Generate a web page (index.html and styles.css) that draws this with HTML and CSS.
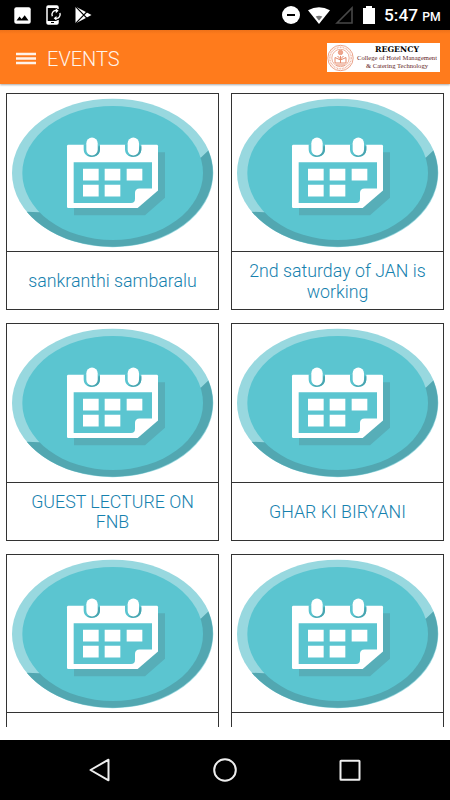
FILE: index.html
```
<!DOCTYPE html>
<html lang="en">

<head>
    <meta charset="UTF-8">
    <meta name="viewport" content="width=device-width, initial-scale=1.0">
    <title>Events</title>
    <link rel="stylesheet" href="styles.css">
</head>

<body>
    <!-- shared calendar picture -->
    <svg class="sprite" aria-hidden="true">
        <symbol id="calendar" viewBox="21 21 633 474" preserveAspectRatio="none">
            <ellipse cx="338" cy="258.5" rx="302" ry="223.5" fill="#98d8df" />
            <path d="M625 191 A302 223.5 0 0 1 80 375 L118 377 L338 258 L603 212Z" fill="#52a7b1" />
            <ellipse cx="338" cy="258.5" rx="271" ry="201.5" fill="#5bc5d0" />
            <path d="M222 360 H412 L470 196 H495 V333 L435 386 H222Z" fill="#57aeb8" />
            <path d="M205 174 H470 Q474 174 474 178 V311 L413 364 H205 Q201 364 201 360 V178 Q201 174 205 174Z" fill="#fff" />
            <path d="M251 172 H300 V187 C300 218 251 218 251 187Z M375 172 H424 V187 C424 218 375 218 375 187Z" fill="#5bc5d0" />
            <path d="M295 178 H300 V187 C300 210 272 214 262 205 Q295 207 295 178Z M419 178 H424 V187 C424 210 396 214 386 205 Q419 207 419 178Z" fill="#48a5b0" />
            <rect x="259" y="152" width="34" height="54" rx="17" fill="#fff" />
            <rect x="383" y="152" width="34" height="54" rx="17" fill="#fff" />
            <path d="M221 226 H456 V305 H419 Q405 305 405 319 V336 Q405 349 393 349 H221Z" fill="#5bc5d0" />
            <path d="M249 246h47v35h-47z M314 246h47v35h-47z M380 246h47v35h-47z M249 294h47v35h-47z M314 294h47v35h-47z" fill="#fff" />
        </symbol>
    </svg>

    <div class="status-bar">
        <div class="status-left">
            <svg class="icon-image" viewBox="0 0 17 17">
                <rect x="0.3" y="0.3" width="16.4" height="16.4" rx="2" fill="#fff" />
                <path d="M2.5 13.5 L5.5 9.5 L7.7 12 L10.7 8.3 L14.5 13.5Z" fill="#000" />
            </svg>
            <svg class="icon-sync" viewBox="0 0 16 20">
                <path d="M12 4 V2.2 Q12 1 10.8 1 H2.2 Q1 1 1 2.2 V17.8 Q1 19 2.2 19 H10.8 Q12 19 12 17.8 V15" fill="none" stroke="#fff" stroke-width="1.5" />
                <path d="M1 1h11v2H1z M1 16h11v3H1z" fill="#fff" />
                <path d="M5 17.5h3" stroke="#000" />
                <path d="M6.3 11.2 A4 4 0 0 1 10.5 5.6 M13.9 8 A4 4 0 0 1 9.8 13.4" fill="none" stroke="#fff" stroke-width="1.4" />
                <path d="M9.8 3.3 L12.6 5.8 L9.8 8.2Z M10.5 10.9 L7.7 13.3 L10.5 15.8Z" fill="#fff" />
            </svg>
            <svg class="icon-play" viewBox="0 0 17 18">
                <path d="M0.5 0.5 L16.5 9 L0.5 17.5Z" fill="#fff" />
                <path d="M0 0 L12.7 13 M0 18 L12.7 5" stroke="#000" stroke-width="1.1" />
            </svg>
        </div>
        <div class="status-right">
            <svg class="icon-dnd" viewBox="0 0 18 18">
                <circle cx="9" cy="9" r="9" fill="#fff" />
                <path d="M5 9h8" stroke="#000" stroke-width="2" />
            </svg>
            <svg class="icon-wifi" viewBox="0 0 22 17">
                <path d="M0 3.3 Q11 -3 22 3.3 L11 17Z" fill="#fff" />
                <path d="M7.7 9.5 Q11 8.2 14.3 9.5 L11 13.8Z" fill="#777" />
            </svg>
            <svg class="icon-signal" viewBox="0 0 18 18">
                <path d="M2 17 L17 2 V17Z" fill="none" stroke="#484848" stroke-width="1.6" />
            </svg>
            <svg class="icon-battery" viewBox="0 0 12 18">
                <path d="M0 2h3V0h6v2h3v16H0z" fill="#fff" />
            </svg>
            <span class="clock">5:47 <small>PM</small></span>
        </div>
    </div>

    <header class="app-bar">
        <svg class="menu" viewBox="0 0 20 13">
            <path d="M0.5 2h19 M0.5 6.5h19 M0.5 11h19" stroke="#fff3ea" stroke-width="2.7" stroke-linecap="round" />
        </svg>
        <h1 class="title">EVENTS</h1>
        <div class="logo">
            <svg class="seal" viewBox="0 0 27 28" fill="none" stroke="#e58b6c">
                <circle cx="13.5" cy="14" r="12.7" stroke-width="0.8" />
                <circle cx="13.5" cy="14" r="10.7" stroke-width="1.5" stroke-dasharray="0.9 0.7" opacity="0.65" />
                <circle cx="13.5" cy="14" r="8.7" stroke-width="0.7" />
                <circle cx="13.5" cy="8.5" r="2.2" fill="#eda58d" stroke-width="0.7" />
                <path d="M10.5 12 L13.5 15 L16.5 12 M8 13.5 V19 H19 V13.5 L13.5 16Z M13.5 12V19 M9 21H18" stroke-width="1" />
            </svg>
            <div class="logo-text">
                <span class="logo-name">REGENCY</span>
                <span class="logo-line">College of Hotel Management</span>
                <span class="logo-line">&amp; Catering Technology</span>
            </div>
        </div>
    </header>

    <main class="events">
        <div class="card">
            <svg class="card-image"><use href="#calendar" /></svg>
            <p class="card-title">sankranthi sambaralu</p>
        </div>
        <div class="card">
            <svg class="card-image"><use href="#calendar" /></svg>
            <p class="card-title">2nd saturday of JAN is working</p>
        </div>
        <div class="card">
            <svg class="card-image"><use href="#calendar" /></svg>
            <p class="card-title">GUEST LECTURE ON FNB</p>
        </div>
        <div class="card">
            <svg class="card-image"><use href="#calendar" /></svg>
            <p class="card-title">GHAR KI BIRYANI</p>
        </div>
        <div class="card">
            <svg class="card-image"><use href="#calendar" /></svg>
            <p class="card-title"></p>
        </div>
        <div class="card">
            <svg class="card-image"><use href="#calendar" /></svg>
            <p class="card-title"></p>
        </div>
    </main>

    <nav class="nav-bar">
        <svg viewBox="0 0 26 26">
            <path d="M3.5 13 L21.5 2.7 V23.3Z" />
        </svg>
        <svg viewBox="0 0 26 26">
            <circle cx="13" cy="13" r="10.8" />
        </svg>
        <svg viewBox="0 0 26 26">
            <rect x="3.5" y="3.7" width="19" height="19" rx="0.5" />
        </svg>
    </nav>
</body>

</html>
```
FILE: styles.css
```
*,
*::before,
*::after {
    box-sizing: border-box;
}

body {
    margin: 0;
    width: 450px;
    height: 800px;
    display: flex;
    flex-direction: column;
    overflow: hidden;
    background-color: #fff;
    font-family: Roboto, sans-serif;
}

p,
h1 {
    margin: 0;
}

svg {
    display: block;
    flex: none;
}

.sprite {
    position: absolute;
    width: 0;
    height: 0;
}

.status-bar {
    flex: none;
    height: 30px;
    padding: 0 10px 0 14px;
    display: flex;
    justify-content: space-between;
    align-items: center;
    background-color: #000;
    color: #fff;
}

.status-left,
.status-right {
    display: flex;
    align-items: center;
}

.icon-image {
    width: 17px;
    height: 17px;
}

.icon-sync {
    width: 16px;
    height: 20px;
    margin-left: 15px;
}

.icon-play {
    width: 17px;
    height: 18px;
    margin-left: 13px;
}

.icon-dnd {
    width: 18px;
    height: 18px;
}

.icon-wifi {
    width: 22px;
    height: 17px;
    margin-left: 8px;
}

.icon-signal {
    width: 18px;
    height: 18px;
    margin-left: 5px;
}

.icon-battery {
    width: 12px;
    height: 18px;
    margin-left: 10px;
}

.clock {
    width: 56px;
    margin-left: 9px;
    padding-top: 2px;
    font-size: 17.3px;
    font-weight: 500;
    line-height: 30px;
    white-space: nowrap;
}

.clock small {
    font-size: 12.2px;
}

.app-bar {
    position: relative;
    flex: none;
    height: 54px;
    padding: 0 10px 0 16px;
    display: flex;
    align-items: center;
    background: linear-gradient(#ee7119, #ff7b1c 4px);
    box-shadow: 0 1px 2px rgba(0, 0, 0, 0.35);
}

.menu {
    width: 20px;
    height: 13px;
    margin-top: 2px;
}

.title {
    margin-left: 11px;
    padding-top: 3px;
    color: #fff3ea;
    font-size: 20px;
    font-weight: 300;
    line-height: 24px;
}

.logo {
    width: 113px;
    height: 29px;
    margin: 1px 0 0 auto;
    display: flex;
    align-items: center;
    background-color: #fff;
}

.seal {
    width: 27px;
    height: 28px;
}

.logo-text {
    flex: 1;
    display: flex;
    flex-direction: column;
    align-items: center;
    font-family: "Liberation Serif", serif;
    white-space: nowrap;
}

.logo-name {
    color: #000;
    font-family: "DejaVu Serif", serif;
    font-size: 7.8px;
    font-weight: 700;
    line-height: 9px;
}

.logo-line {
    color: #5f1d1d;
    font-size: 6.6px;
    line-height: 8px;
}

.events {
    flex: 1;
    min-height: 0;
    margin-bottom: 13px;
    padding: 8.5px 6px 0;
    display: grid;
    grid-template-columns: 213px 213px;
    grid-auto-rows: 217.6px;
    gap: 13.1px 12px;
    overflow: hidden;
}

.card {
    display: flex;
    flex-direction: column;
    border: 1px solid #333;
}

.card-image {
    width: 211px;
    height: 157.6px;
}

.card-title {
    flex: 1;
    padding: 2px 14px 0;
    display: flex;
    align-items: center;
    justify-content: center;
    border-top: 1px solid #333;
    color: #1681ae;
    font-size: 17.8px;
    font-weight: 300;
    line-height: 20.6px;
    text-align: center;
}

.nav-bar {
    flex: none;
    height: 60px;
    padding: 0 87px;
    display: flex;
    align-items: center;
    justify-content: space-between;
    background-color: #000;
}

.nav-bar svg {
    width: 26px;
    height: 26px;
    fill: none;
    stroke: #eee;
    stroke-width: 2;
    stroke-linejoin: round;
}
```
